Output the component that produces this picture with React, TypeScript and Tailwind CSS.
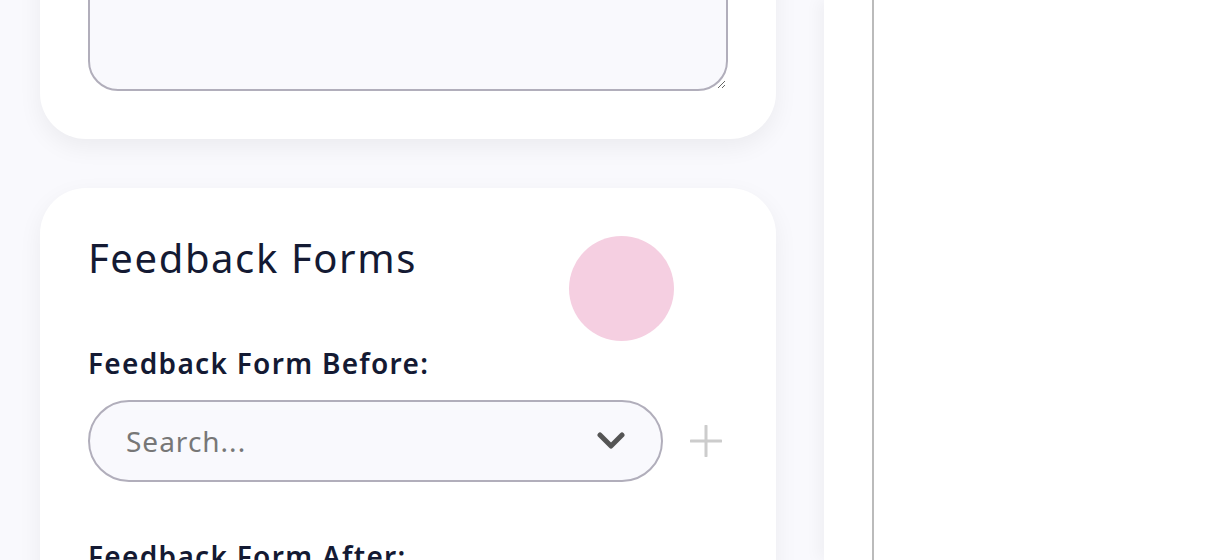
export default function App() {
  return (
    <div className="flex h-[560px] w-[1228px] overflow-hidden bg-[#f9f9fd] font-['Noto_Sans',sans-serif] text-[#141a33]">
      <div className="w-[824px] shrink-0 pr-12 pl-10">
        <div className="mt-[-157px] rounded-[46px] bg-white p-12 shadow-[0_8px_24px_rgba(0,0,0,0.06)]">
          <textarea className="block h-[200px] w-full resize-y rounded-[30px] border-2 border-[#b1aebb] bg-[#f9f9fd] outline-none" />
        </div>

        <div className="mt-[49px] rounded-[46px] bg-white px-12 pt-12 pb-16 shadow-[0_8px_24px_rgba(0,0,0,0.06)]">
          <div className="flex h-[105px] items-start">
            <h2 className="mt-[-2px] w-[481px] text-[40px] leading-[1.2] font-normal tracking-[1.6px]">Feedback Forms</h2>
            <div className="h-[105px] w-[105px] rounded-full bg-[#f5cfe1]" />
          </div>

          <label className="mt-[4px] block text-[28px] leading-[1.3] font-semibold tracking-[1.3px]">Feedback Form Before:</label>
          <div className="mt-[19px] flex items-center gap-[27px]">
            <div className="flex h-[82px] w-[575px] items-center rounded-full border-2 border-[#b1aebb] bg-[#f9f9fd] pr-9 pl-[36px]">
              <span className="flex-1 text-[28px] text-[#777777] tracking-[1px]">Search...</span>
              <svg width="28" height="18" viewBox="0 0 28 18" fill="none">
                <path d="M3 3l11 11L25 3" stroke="#555555" strokeWidth="5" strokeLinecap="round" strokeLinejoin="round" />
              </svg>
            </div>
            <svg width="32" height="32" viewBox="0 0 32 32" fill="none">
              <path d="M16 1v30M1 16h30" stroke="#cccccc" strokeWidth="3" strokeLinecap="round" />
            </svg>
          </div>

          <label className="mt-[56px] block text-[28px] leading-[1.3] font-semibold tracking-[1.3px]">Feedback Form After:</label>
        </div>
      </div>

      <div className="flex flex-1 bg-white pl-12 shadow-[-6px_0_14px_rgba(0,0,0,0.04)]">
        <div className="w-[2px] bg-[#bbbbbb]" />
      </div>
    </div>
  )
}
